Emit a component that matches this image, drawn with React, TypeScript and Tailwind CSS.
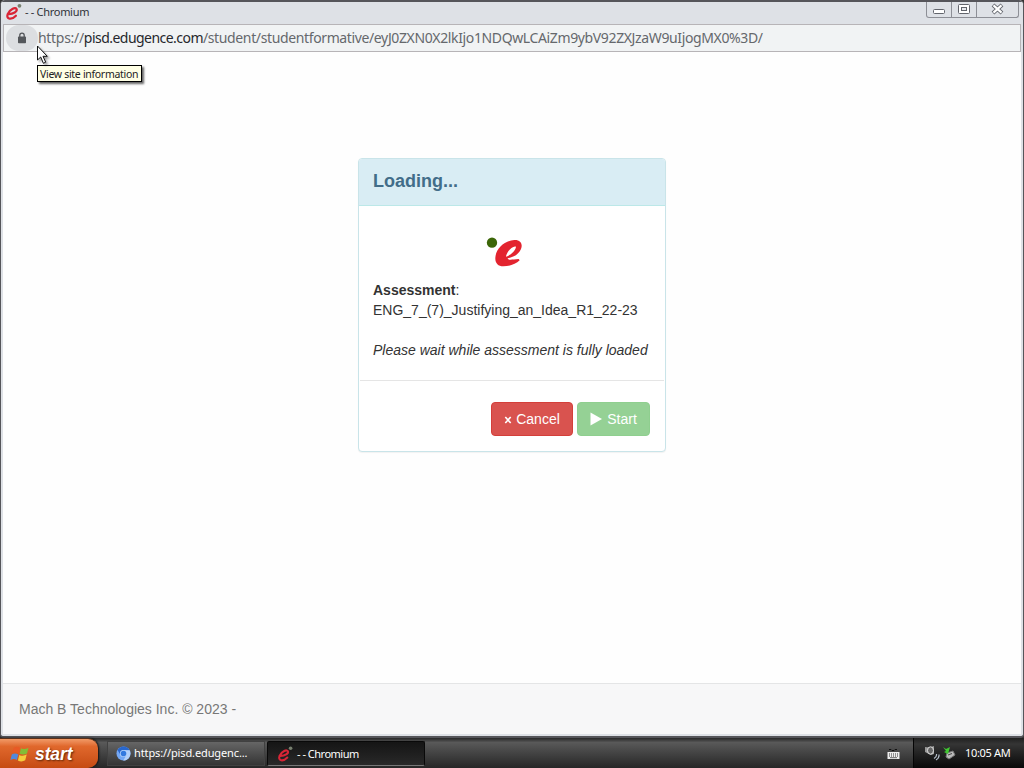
import React from 'react'

function MiniLogo({ className }: { className?: string }) {
  return (
    <svg viewBox="0 0 16 17" className={className} fill="none">
      <path
        d="M3.5 10.5C8 10.3 11.6 8 11 6C10.2 3.4 4.6 5.6 2.5 10.5C.8 15.3 6 16.5 10.3 12"
        stroke="#d92536"
        strokeWidth="2.1"
        strokeLinecap="round"
      />
      <circle cx="13.6" cy="2.7" r="1.8" fill="#78806f" />
    </svg>
  )
}

function Logo() {
  return (
    <svg viewBox="48 36 114 93" className="h-[31px] w-[38px]">
      <circle cx="66" cy="53" r="15.5" fill="#3c6608" />
      <path
        fillRule="evenodd"
        fill="#e3242f"
        d="M76 98C78 70 104 47 133 45C152 44 159 58 153 72C146 88 132 96 113 100C113 106 125 104 146 102L149 106C138 117 120 124 100 124C84 124 75 113 76 98ZM108 95C122 90 136 78 138 65C130 60 110 79 108 95Z"
      />
    </svg>
  )
}

function TitleBar() {
  return (
    <div className="flex h-[24px] items-start justify-between border-t-2 border-[#55555a] bg-[#dee1e6] pr-[4px] pl-[4px]">
      <div className="flex items-center pt-[1px]">
        <MiniLogo className="h-[18px] w-[17px]" />
        <span className="ml-[3px] text-[11px] leading-[18px] tracking-[-0.3px] text-[#303338]">- - Chromium</span>
      </div>
      <div className="flex h-[16px] rounded-b-[3px] border border-t-0 border-[#8d8f96] text-[#62656c]">
        <div className="flex w-[25px] justify-center border-r border-[#8d8f96]">
          <svg className="h-[15px] w-[14px]" viewBox="0 0 14 15">
            <rect x="1.5" y="7.5" width="11" height="4" rx="1" fill="#fff" stroke="currentColor" />
          </svg>
        </div>
        <div className="flex w-[25px] justify-center border-r border-[#8d8f96]">
          <svg className="h-[15px] w-[13px]" viewBox="0 0 13 15">
            <rect x=".5" y="2.5" width="11" height="9" rx="1" fill="#fff" stroke="currentColor" />
            <rect x="3.5" y="5.5" width="5" height="3" fill="#e7e9ed" stroke="currentColor" />
          </svg>
        </div>
        <div className="flex w-[41px] justify-center">
          <svg className="h-[15px] w-[13px]" viewBox="0 0 13 15">
            <path d="M2 3L11 11M11 3L2 11" stroke="currentColor" strokeWidth="4" />
            <path d="M2.5 3.4L10.5 10.6M10.5 3.4L2.5 10.6" stroke="#fff" strokeWidth="2.2" />
          </svg>
        </div>
      </div>
    </div>
  )
}

function AddressBar() {
  return (
    <div className="mr-[2px] ml-[2px] flex h-[28px] items-center border border-[#b7b4b7] bg-[#f1f3f4]">
      <div className="ml-[2px] flex h-[26px] w-[32px] shrink-0 items-center justify-center rounded-full bg-[#dcdee1]">
        <svg viewBox="0 0 10 12" className="h-[12px] w-[10px]">
          <path d="M2.8 5V3.3a2.2 2.2 0 0 1 4.4 0V5" fill="none" stroke="#54575b" strokeWidth="1.3" />
          <rect x="1" y="4.6" width="8" height="6.6" rx=".8" fill="#54575b" />
        </svg>
      </div>
      <p className="text-[14px] leading-[20px] whitespace-nowrap text-[#65686c]">
        <span className="tracking-[-0.3px]">https://</span>
        <span className="tracking-[-0.54px] text-[#26282c]">pisd.edugence.com</span>
        <span className="tracking-[-0.37px]">/student/studentformative/eyJ0ZXN0X2lkIjo1NDQwLCAiZm9ybV92ZXJzaW9uIjogMX0%3D/</span>
      </p>
    </div>
  )
}

function SiteTooltip() {
  return (
    <>
      <svg viewBox="0 0 14 22" className="absolute top-[45px] left-[36px] z-10 h-[22px] w-[14px] drop-shadow-[2px_2px_1px_rgba(0,0,0,0.35)]">
        <path d="M1.5 1V15L4.7 12L7.4 18.3L9.7 17.2L7 11.3H11.3Z" fill="#fff" stroke="#111" />
      </svg>
      <div className="absolute top-[65px] left-[37px] h-[17px] w-[105px] border border-black bg-[#ffffe5] pl-[2px] text-[10.5px] leading-[16px] tracking-[-0.3px] whitespace-nowrap text-[#222] shadow-[2px_2px_2px_rgba(0,0,0,0.6)]">
        View site information
      </div>
    </>
  )
}

function LoadingPanel() {
  return (
    <div className="flex h-[294px] w-[308px] flex-col rounded-[4px] border border-[#c9e4e9] bg-white text-[14px] leading-[20px] text-[#333] shadow-[0_1px_1px_rgba(0,0,0,0.05)]">
      <div className="h-[47px] rounded-t-[3px] border-b border-[#bce8e8] bg-[#d9edf4] px-[14px] pt-[12px] text-[18px] font-bold text-[#426d89]">
        Loading...
      </div>
      <div className="flex flex-col px-[14px] pt-[31px]">
        <div className="flex h-[43px] items-start pl-[113px]">
          <Logo />
        </div>
        <p>
          <b>Assessment</b>:
        </p>
        <p className="whitespace-nowrap">ENG_7_(7)_Justifying_an_Idea_R1_22-23</p>
        <p className="mt-[20px] whitespace-nowrap italic">Please wait while assessment is fully loaded</p>
      </div>
      <div className="mx-[1px] mt-[20px] flex justify-end gap-[4px] border-t border-[#e5e5e5] pt-[21px] pr-[14px]">
        <button className="flex h-[34px] w-[82px] items-center justify-center gap-[4px] rounded-[4px] border border-[#d43f3a] bg-[#d9534f] text-white">
          <svg viewBox="0 0 8 8" className="mt-[1px] h-[8px] w-[8px]">
            <path d="M1.3 1L6.7 7M6.7 1L1.3 7" stroke="currentColor" strokeWidth="1.6" />
          </svg>
          Cancel
        </button>
        <button className="flex h-[34px] w-[73px] items-center justify-center gap-[5px] rounded-[4px] border border-[#8fcf8f] bg-[#95d195] text-white">
          <svg viewBox="0 0 12 14" className="h-[14px] w-[12px]">
            <path d="M.5 .5L12 7L.5 13.5Z" fill="currentColor" />
          </svg>
          Start
        </button>
      </div>
    </div>
  )
}

function WindowsFlag() {
  return (
    <svg viewBox="0 0 20 18" className="h-[18px] w-[20px]">
      <path d="M3.5 3C6 1.2 8 1.5 10 2.8L8.6 8.4C6.5 7 4.5 7 2 8.4Z" fill="#e75a25" />
      <path d="M11 3.2C13.5 4.5 16 4.2 18.5 2.8L17 8.5C14.5 10 12 9.8 9.6 8.8Z" fill="#83bd36" />
      <path d="M1.8 9.5C4.2 8 6.2 8.2 8.3 9.5L6.9 15C5 13.7 2.8 13.7.4 15Z" fill="#5189dc" />
      <path d="M9.3 9.9C11.8 11.2 14.2 11 16.7 9.6L15.2 15.3C12.8 16.7 10.3 16.7 7.9 15.5Z" fill="#f4cc3c" />
    </svg>
  )
}

function Taskbar() {
  return (
    <div className="flex h-[30px] bg-linear-to-b from-[#292929] via-[#595959] via-15% to-[#272727]">
      <div className="flex h-[30px] w-[98px] items-center rounded-r-[10px] border-t border-[#5a3019] bg-linear-to-b from-[#f19a66] via-[#e0682c] via-25% to-[#c64b12] pl-[10px] shadow-[1px_0_2px_#111]">
        <WindowsFlag />
        <span className="ml-[5px] font-['Liberation_Sans',Arial,sans-serif] text-[17.5px] leading-[20px] font-bold tracking-[-0.1px] text-white italic [text-shadow:1px_1px_2px_#5c2407]">
          start
        </span>
      </div>
      <div className="mt-[3px] ml-[9px] flex h-[25px] w-[158px] items-center border border-[#414141] bg-linear-to-b from-[#666] to-[#353535] pl-[8px] text-[11px] text-white">
        <svg viewBox="0 0 16 16" className="h-[15px] w-[15px]">
          <circle cx="8" cy="8" r="7.5" fill="#75a8f4" />
          <path d="M1.6 4.2A7.5 7.5 0 0 1 14.5 4.4H8A3.7 3.7 0 0 0 4.5 9Z" fill="#2967cd" />
          <path d="M14.5 4.5A7.5 7.5 0 0 1 7.7 15.5L11.3 9.5Q12 6.5 9 4.5Z" fill="#b3d0fa" />
          <circle cx="8" cy="8" r="3.8" fill="#b9d5fb" />
          <circle cx="8" cy="8" r="3" fill="#3379df" />
        </svg>
        <span className="ml-[3px] tracking-[-0.12px]">https://pisd.edugenc...</span>
      </div>
      <div className="mt-[3px] ml-[2px] flex h-[25px] w-[158px] items-center rounded-[2px] border border-[#090909] border-b-[#777] bg-linear-to-b from-[#151515] to-[#292929] pl-[9px] text-[11px] text-white">
        <MiniLogo className="h-[18px] w-[16px]" />
        <span className="ml-[4px] pt-[2px] tracking-[-0.5px]">- - Chromium</span>
      </div>
      <div className="ml-auto flex w-[26px] items-center pt-[2px]">
        <svg viewBox="0 0 13 12" className="h-[12px] w-[13px]">
          <path d="M2 1.5H4L5 2.5H7L8 1.5H10" fill="none" stroke="#111" />
          <rect x=".5" y="4" width="12" height="7" fill="#eee" />
          <path d="M2 6H11.5M2 8H11.5" stroke="#333" strokeDasharray="1 1" />
          <path d="M3 9.7H10" stroke="#444" strokeWidth=".8" />
        </svg>
      </div>
      <div className="flex w-[111px] items-center border-l border-[#050505] bg-linear-to-b from-[#202020] via-[#353535] via-20% to-[#090909] pl-[10px] text-[11px] text-white">
        <svg viewBox="0 0 16 16" className="h-[16px] w-[16px]">
          <path d="M1 2L5 2.5L10 1V9L7 10L1 7Z" fill="#999" />
          <ellipse cx="6.5" cy="5.5" rx="3" ry="3.7" fill="#666" stroke="#ddd" />
          <path d="M10 13.5Q13 12 12.5 9M12 15Q15.5 13 15 9.5" fill="none" stroke="#b5bfcb" strokeWidth="1.2" />
        </svg>
        <svg viewBox="0 0 14 16" className="ml-[2px] h-[16px] w-[14px]">
          <path d="M5 8L11 6L13 10L7 14L4 12Z" fill="#bbb" stroke="#777" />
          <path d="M6 10L10 8.5" stroke="#444" />
          <path d="M1 2L4 4L8 2L6 9L2 7L4 6Z" fill="#41c832" />
        </svg>
        <span className="ml-[9px] tracking-[-0.32px] whitespace-nowrap">10:05 AM</span>
      </div>
    </div>
  )
}

export default function App() {
  return (
    <div className="relative flex h-[768px] w-[1024px] flex-col overflow-hidden bg-[#333] font-['Noto_Sans','DejaVu_Sans',sans-serif]">
      <div className="flex h-[738px] flex-col overflow-hidden rounded-t-[5px] rounded-b-[4px] border-x border-b-2 border-[#55555a] bg-[#dee1e6]">
        <TitleBar />
        <AddressBar />
        <div className="mx-[2px] mb-[2px] flex flex-1 flex-col bg-[#fefefe] font-['Liberation_Sans',Arial,sans-serif]">
          <main className="flex flex-1 justify-center pt-[106px]">
            <LoadingPanel />
          </main>
          <footer className="h-[51px] border-t border-[#e4e5e6] bg-[#f7f7f8] pt-[15px] pl-[16px] text-[14px] leading-[20px] text-[#777]">
            Mach B Technologies Inc. © 2023 -
          </footer>
        </div>
      </div>
      <Taskbar />
      <SiteTooltip />
    </div>
  )
}
